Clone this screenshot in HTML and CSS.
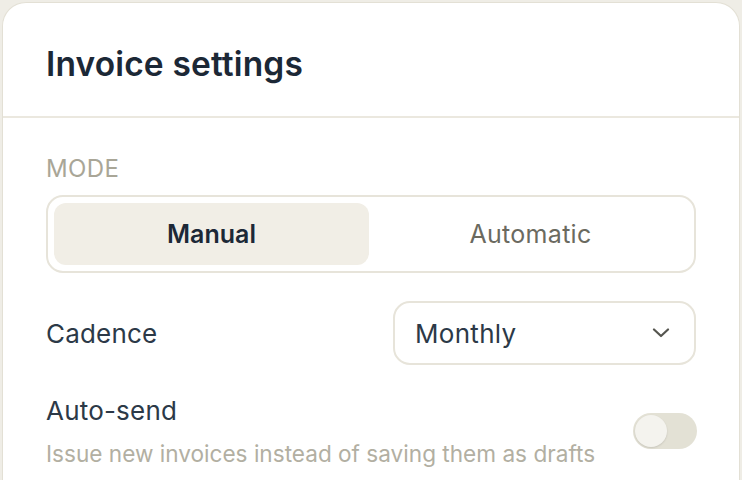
FILE: index.html
```html
<!DOCTYPE html>
<html>
<head>
<meta charset="utf-8">
<link rel="stylesheet" href="styles.css">
</head>
<body>
<div class="card">
  <div class="card-head">
    <h1 class="title">Invoice settings</h1>
  </div>
  <div class="card-body">
    <div class="section-label">MODE</div>
    <div class="segmented">
      <div class="seg seg-active">Manual</div>
      <div class="seg">Automatic</div>
    </div>
    <div class="row">
      <div class="row-label">Cadence</div>
      <div class="select">
        <span class="select-value">Monthly</span>
        <svg class="chevron" width="18" height="10" viewBox="0 0 18 10"><path d="M2 1.5 L9 8 L16 1.5" fill="none" stroke="#55554f" stroke-width="2.2" stroke-linecap="round" stroke-linejoin="round"/></svg>
      </div>
    </div>
    <div class="row row-toggle">
      <div class="row-text">
        <div class="row-label">Auto-send</div>
        <div class="row-desc">Issue new invoices instead of saving them as drafts</div>
      </div>
      <div class="toggle"><div class="knob"></div></div>
    </div>
  </div>
</div>
</body>
</html>
```

FILE: styles.css
```css
html, body {
  margin: 0;
  padding: 0;
}
body {
  background: #efede6;
  font-family: Inter, "Noto Sans", sans-serif;
  padding: 2px 2px 0 2px;
  height: 480px;
  box-sizing: border-box;
  overflow: hidden;
}
.card {
  background: #ffffff;
  border: 1px solid #e3e0d5;
  border-bottom: none;
  border-radius: 24px 24px 0 0;
  height: 600px;
}
.card-head {
  padding: 8px 43px 0 43px;
  height: 115px;
  box-sizing: border-box;
  display: flex;
  align-items: center;
  border-bottom: 2px solid #ebe8df;
}
.title {
  margin: 0;
  font-size: 33.5px;
  font-weight: 600;
  color: #1c2836;
  letter-spacing: 0.15px;
}
.card-body {
  padding: 0 43px;
}
.section-label {
  margin-top: 38px;
  font-size: 24px;
  color: #a9a697;
  letter-spacing: 0.4px;
  line-height: 26px;
}
.segmented {
  margin-top: 13px;
  display: flex;
  gap: 4px;
  border: 2px solid #e7e4da;
  border-radius: 17px;
  padding: 6px;
  height: 62px;
}
.seg {
  flex: 1;
  display: flex;
  align-items: center;
  justify-content: center;
  font-size: 25px;
  font-weight: 400;
  color: #6b6a60;
  border-radius: 12px;
  letter-spacing: 0.3px;
}
.seg-active {
  background: #f1eee6;
  color: #1c2836;
  font-weight: 600;
  letter-spacing: 0;
}
.row {
  margin-top: 28px;
  display: flex;
  align-items: center;
  justify-content: space-between;
}
.row-label {
  font-size: 26px;
  color: #2c3947;
  letter-spacing: 0.2px;
}
.select {
  border: 2px solid #e7e4da;
  border-radius: 17px;
  display: flex;
  align-items: center;
  justify-content: space-between;
  padding: 0 24px 0 20px;
  box-sizing: border-box;
  width: 303px;
  height: 64px;
}
.select-value {
  font-size: 26px;
  color: #2c3947;
  letter-spacing: 0.3px;
}
.chevron {
  display: block;
}
.row-toggle {
  margin-top: 30px;
  align-items: center;
}
.row-text {
  display: flex;
  flex-direction: column;
  gap: 14px;
}
.row-desc {
  font-size: 22.6px;
  color: #b2afa2;
  letter-spacing: 0;
}
.toggle {
  width: 64px;
  height: 36px;
  border-radius: 18px;
  background: #e3e1d5;
  padding: 2px;
  box-sizing: border-box;
  margin-right: -1px;
}
.knob {
  width: 32px;
  height: 32px;
  border-radius: 50%;
  background: #f4f3ee;
  box-shadow: 0 1px 2px rgba(0,0,0,0.12);
}
```
